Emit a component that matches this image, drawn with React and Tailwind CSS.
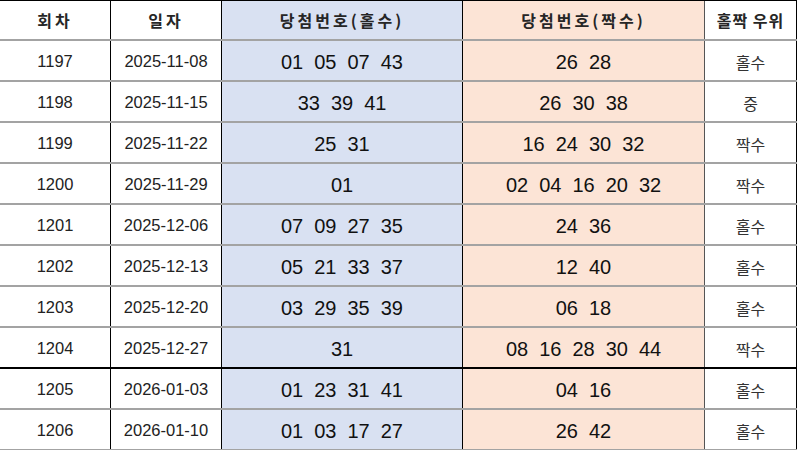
const rows = [
  { no: 1197, date: "2025-11-08", odd: ["01", "05", "07", "43"], even: ["26", "28"], win: "홀수" },
  { no: 1198, date: "2025-11-15", odd: ["33", "39", "41"], even: ["26", "30", "38"], win: "중" },
  { no: 1199, date: "2025-11-22", odd: ["25", "31"], even: ["16", "24", "30", "32"], win: "짝수" },
  { no: 1200, date: "2025-11-29", odd: ["01"], even: ["02", "04", "16", "20", "32"], win: "짝수" },
  { no: 1201, date: "2025-12-06", odd: ["07", "09", "27", "35"], even: ["24", "36"], win: "홀수" },
  { no: 1202, date: "2025-12-13", odd: ["05", "21", "33", "37"], even: ["12", "40"], win: "홀수" },
  { no: 1203, date: "2025-12-20", odd: ["03", "29", "35", "39"], even: ["06", "18"], win: "홀수" },
  { no: 1204, date: "2025-12-27", odd: ["31"], even: ["08", "16", "28", "30", "44"], win: "짝수" },
  { no: 1205, date: "2026-01-03", odd: ["01", "23", "31", "41"], even: ["04", "16"], win: "홀수" },
  { no: 1206, date: "2026-01-10", odd: ["01", "03", "17", "27"], even: ["26", "42"], win: "홀수" },
];

const grid = "grid grid-cols-[111px_111px_241px_242px_92px] w-[797px]";
const kr = "font-['Noto_Sans_CJK_KR',sans-serif]";
const num = "font-['Liberation_Sans',Arial,sans-serif]";
const cell = "flex items-center justify-center pt-[2px]";

const Nums = ({ list }) => (
  <div className={`flex justify-center gap-[11px] text-[20px] text-[#111] ${num}`}>
    {list.map((n, i) => (
      <span key={i}>{n}</span>
    ))}
  </div>
);

export default function App() {
  return (
    <div className="w-[800px] h-[450px] overflow-hidden bg-white">
      {/* header */}
      <div className={`${grid} h-[41px] border-t border-black border-b-2 border-b-[#a3a3a3]`}>
        <div className={`flex items-center justify-center border-r border-black text-[16px] font-bold tracking-[3px] text-[#262626] ${kr}`}>
          회차
        </div>
        <div className={`flex items-center justify-center border-r border-black text-[16px] font-bold tracking-[3px] text-[#262626] ${kr}`}>
          일자
        </div>
        <div className={`flex items-center justify-center border-r border-black bg-[#d9e1f2] text-[16px] font-bold tracking-[3px] text-[#262626] ${kr}`}>
          당첨번호(홀수)
        </div>
        <div className={`flex items-center justify-center border-r border-[#555] bg-[#fce4d6] text-[16px] font-bold tracking-[3px] text-[#262626] ${kr}`}>
          당첨번호(짝수)
        </div>
        <div className={`flex items-center justify-center border-r border-black text-[16px] font-bold tracking-[1px] text-[#262626] ${kr}`}>
          홀짝 우위
        </div>
      </div>
      {rows.map((r) => (
        <div
          key={r.no}
          className={`${grid} h-[41px] border-b-2 ${
            r.no === 1204 ? "border-b-black" : "border-b-[#a3a3a3]"
          }`}
        >
          <div className={`${cell} border-r border-black text-[16.5px] text-[#222] ${num}`}>
            {r.no}
          </div>
          <div className={`${cell} border-r border-black text-[16.5px] text-[#222] ${num}`}>
            {r.date}
          </div>
          <div className={`${cell} border-r border-black bg-[#d9e1f2]`}>
            <Nums list={r.odd} />
          </div>
          <div className={`${cell} border-r border-[#555] bg-[#fce4d6]`}>
            <Nums list={r.even} />
          </div>
          <div className={`${cell} border-r border-black text-[16px] text-[#333] ${kr}`}>
            {r.win}
          </div>
        </div>
      ))}
    </div>
  );
}
